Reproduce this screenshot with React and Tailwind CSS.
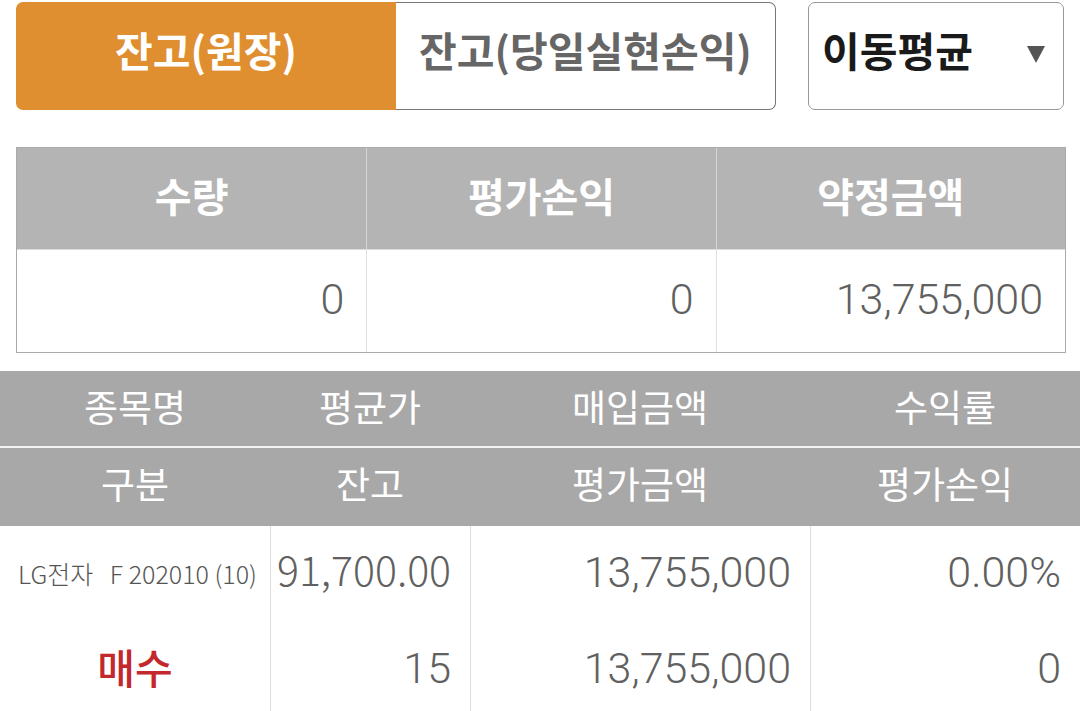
import React from "react";

const FONT = { fontFamily: "Roboto, 'Noto Sans CJK KR', 'Noto Sans', sans-serif" };
const KR = { fontFamily: "'Noto Sans CJK KR', 'Noto Sans', sans-serif" };

export default function App() {
  return (
    <div className="w-[1080px] h-[711px] overflow-hidden bg-white" style={FONT}>
      {/* Top controls */}
      <div className="flex items-start px-4 pt-[2px]">
        <div className="flex w-[760px] h-[108px]">
          <div
            className="w-[380px] h-full rounded-l-[7px] bg-[#df8e30] flex items-center justify-center pb-[12px] text-white text-[41px] font-bold"
            style={KR}
          >
            잔고(원장)
          </div>
          <div
            className="flex-1 h-full rounded-r-[7px] border border-l-0 border-[#777] bg-white flex items-center justify-center pb-[12px] text-[#666] text-[41px] font-bold"
            style={KR}
          >
            잔고(당일실현손익)
          </div>
        </div>
        <div className="ml-8 w-[256px] h-[108px] rounded-[7px] border border-[#999] bg-white flex items-center justify-between pl-[13px] pr-[17px]">
          <span className="text-[41px] font-bold text-[#1a1a1a] pb-[12px]" style={KR}>
            이동평균
          </span>
          <svg width="20" height="19" viewBox="0 0 20 19" className="mb-[4px]">
            <polygon points="1,1 19,1 10,18" fill="#555" />
          </svg>
        </div>
      </div>

      {/* Summary table */}
      <div className="mt-[37px] ml-4 w-[1050px] border border-[#aaa]">
        <div className="grid grid-cols-3 h-[101px] bg-[#b4b4b4]">
          {["수량", "평가손익", "약정금액"].map((t, i) => (
            <div
              key={t}
              className={`flex items-center justify-center pb-[8px] text-white text-[40px] font-bold ${i > 0 ? "border-l border-[#d6d6d6]" : ""}`}
              style={KR}
            >
              {t}
            </div>
          ))}
        </div>
        <div className="grid grid-cols-3 h-[103px] border-t border-[#ddd]">
          {["0", "0", "13,755,000"].map((t, i) => (
            <div
              key={i}
              className={`flex items-center justify-end pr-[22px] pb-[4px] text-[#606060] text-[43px] font-light ${i > 0 ? "border-l border-[#e0e0e0]" : ""}`}
            >
              {t}
            </div>
          ))}
        </div>
      </div>

      {/* Holdings table */}
      <div className="mt-[18px] w-[1080px]">
        <div className="bg-[#a8a8a8]">
          <div className="grid grid-cols-[270px_200px_340px_270px] h-[75px] text-white text-[37px]" style={KR}>
            <div className="flex items-center justify-center pb-[4px]">종목명</div>
            <div className="flex items-center justify-center pb-[4px]">평균가</div>
            <div className="flex items-center justify-center pb-[4px]">매입금액</div>
            <div className="flex items-center justify-center pb-[4px]">수익률</div>
          </div>
          <div className="h-[2px] bg-[#f4f4f4]" />
          <div className="grid grid-cols-[270px_200px_340px_270px] h-[78px] text-white text-[37px]" style={KR}>
            <div className="flex items-center justify-center pb-[6px]">구분</div>
            <div className="flex items-center justify-center pb-[6px]">잔고</div>
            <div className="flex items-center justify-center pb-[6px]">평가금액</div>
            <div className="flex items-center justify-center pb-[6px]">평가손익</div>
          </div>
        </div>
        <div className="grid grid-cols-[270px_200px_340px_270px]">
          <div className="flex flex-col">
            <div className="h-[96px] flex items-center pl-[18px] text-[25px] font-light text-[#555]" style={KR}>
              LG전자&nbsp;&nbsp;&nbsp;F 202010 (10)
            </div>
            <div className="h-[96px] flex items-center justify-center pb-[6px] text-[41px] font-medium text-[#c3282d]" style={KR}>
              매수
            </div>
          </div>
          <div className="flex flex-col border-l border-[#ddd]">
            <div className="h-[96px] flex items-center justify-end pr-[19px] pb-[11px] text-[41px] font-light text-[#606060]" style={KR}>91,700.00</div>
            <div className="h-[96px] flex items-center justify-end pr-[19px] pb-[4px] text-[43px] font-light text-[#606060]">15</div>
          </div>
          <div className="flex flex-col border-l border-[#ddd]">
            <div className="h-[96px] flex items-center justify-end pr-[19px] pb-[4px] text-[43px] font-light text-[#606060]">13,755,000</div>
            <div className="h-[96px] flex items-center justify-end pr-[19px] pb-[4px] text-[43px] font-light text-[#606060]">13,755,000</div>
          </div>
          <div className="flex flex-col border-l border-[#ddd]">
            <div className="h-[96px] flex items-center justify-end pr-[19px] pb-[4px] text-[43px] font-light text-[#606060]">0.00%</div>
            <div className="h-[96px] flex items-center justify-end pr-[19px] pb-[4px] text-[43px] font-light text-[#606060]">0</div>
          </div>
        </div>
      </div>
    </div>
  );
}
